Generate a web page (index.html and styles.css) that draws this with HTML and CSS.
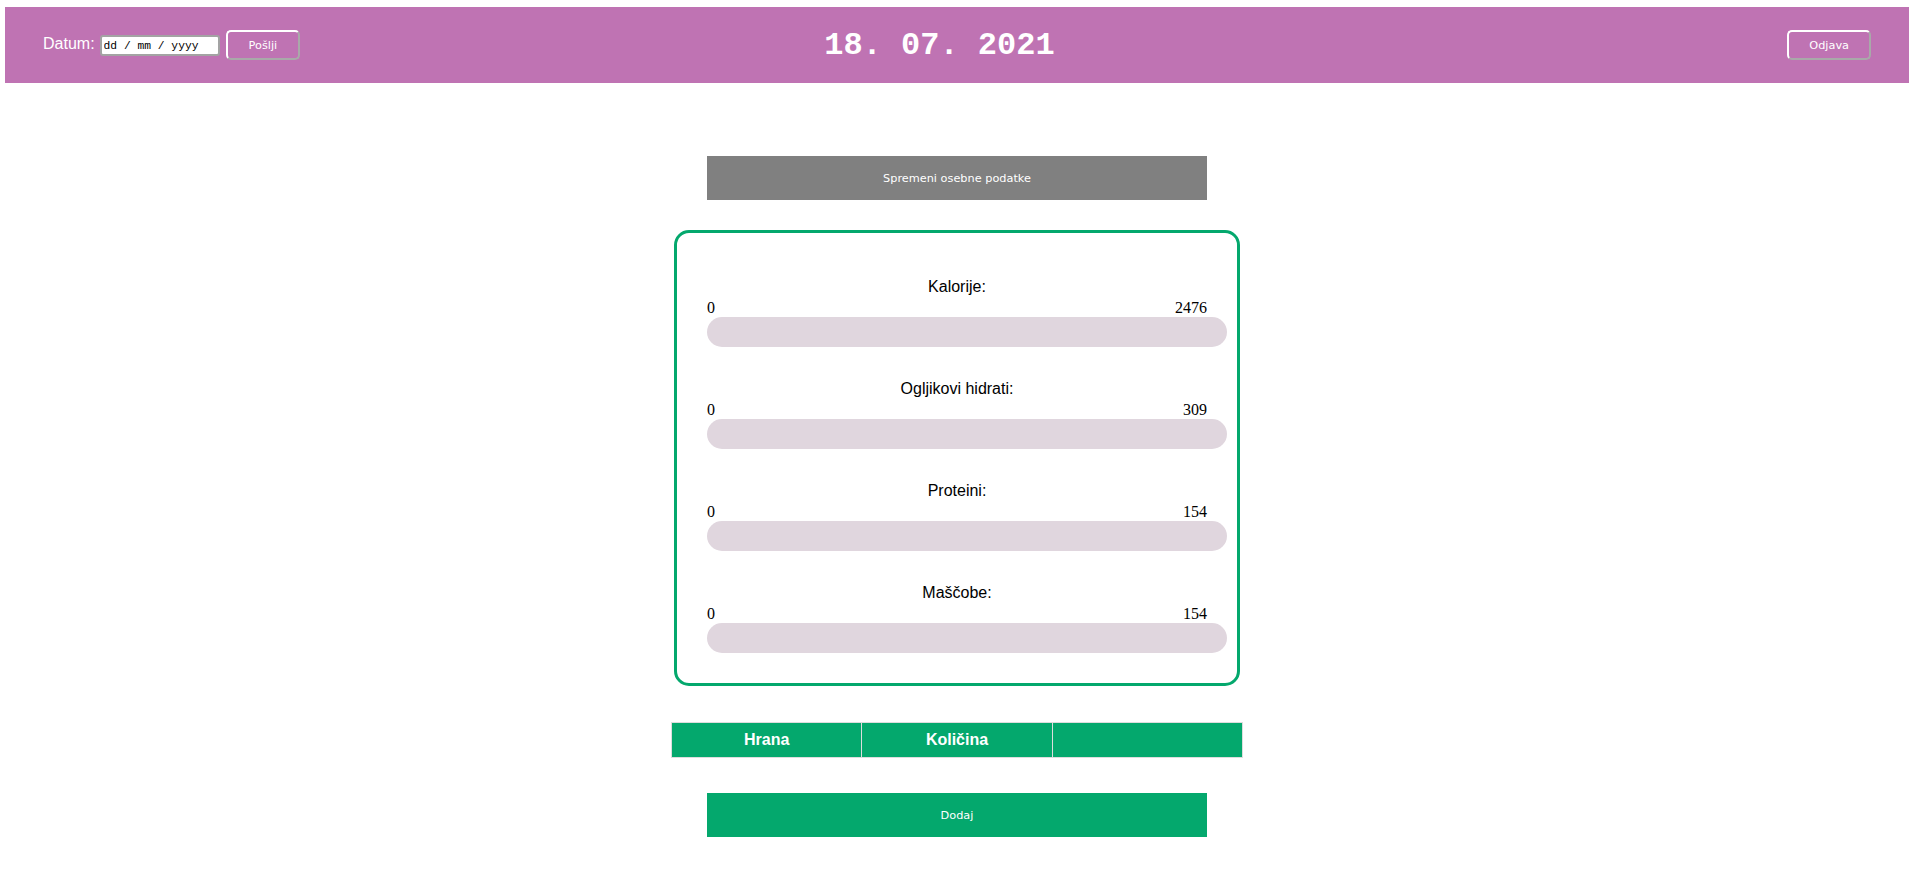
FILE: index.html
```html
<!DOCTYPE html>
<html lang="sl">
<head>
<meta charset="utf-8">
<title>Dnevnik prehrane</title>
<link rel="stylesheet" href="styles.css">
</head>
<body>
<header class="topbar">
  <form class="date-form">
    <label class="date-label" for="datum">Datum:</label>
    <input class="date-input" id="datum" type="text" value="dd / mm / yyyy" readonly>
    <button class="outline-btn send" type="button">Pošlji</button>
  </form>
  <h1 class="today">18. 07. 2021</h1>
  <button class="outline-btn logout" type="button">Odjava</button>
</header>

<main class="content">
  <button class="wide-btn gray" type="button">Spremeni osebne podatke</button>

  <section class="card">
    <div class="stat">
      <div class="stat-title">Kalorije:</div>
      <div class="stat-range"><span>0</span><span>2476</span></div>
      <div class="bar"></div>
    </div>
    <div class="stat">
      <div class="stat-title">Ogljikovi hidrati:</div>
      <div class="stat-range"><span>0</span><span>309</span></div>
      <div class="bar"></div>
    </div>
    <div class="stat">
      <div class="stat-title">Proteini:</div>
      <div class="stat-range"><span>0</span><span>154</span></div>
      <div class="bar"></div>
    </div>
    <div class="stat">
      <div class="stat-title">Maščobe:</div>
      <div class="stat-range"><span>0</span><span>154</span></div>
      <div class="bar"></div>
    </div>
  </section>

  <table class="food-table">
    <thead>
      <tr><th>Hrana</th><th>Količina</th><th></th></tr>
    </thead>
  </table>

  <button class="wide-btn green" type="button">Dodaj</button>
</main>
</body>
</html>
```

FILE: styles.css
```css
html, body {
  background: #ffffff;
}

body {
  margin: 7px 8px 0 5px;
  font-family: "Liberation Sans", Arial, sans-serif;
}

.topbar {
  height: 76px;
  background: #bf73b3;
  display: flex;
  align-items: center;
  padding: 0 38px 0 38px;
  box-sizing: border-box;
}

.date-form {
  display: flex;
  align-items: baseline;
  margin: 0;
}

.date-label {
  color: #ffffff;
  font-size: 16px;
  line-height: 18px;
  margin-right: 5px;
}

.date-input {
  width: 120px;
  height: 21px;
  box-sizing: border-box;
  border: 2px solid #a3a3a3;
  border-radius: 3px;
  padding: 0 0 0 2px;
  background: #ffffff;
  color: #000000;
  font-family: "Liberation Mono", "Courier New", monospace;
  font-size: 11.3px;
  margin: 0 6px 0 0;
}

.outline-btn {
  height: 30px;
  padding: 0 20px;
  background: transparent;
  color: #ffffff;
  border: 2px solid #ffffff;
  border-right-color: #a9a9a9;
  border-bottom-color: #a9a9a9;
  border-radius: 5px;
  font-family: "DejaVu Sans", Verdana, sans-serif;
  font-size: 11.3px;
  cursor: pointer;
}

.send {
  padding: 0 21px;
}

.today {
  margin: 0 0 0 524px;
  color: #ffffff;
  font-family: "Liberation Mono", "Courier New", monospace;
  font-weight: bold;
  font-size: 32px;
  line-height: normal;
}

.logout {
  margin-left: auto;
}

.content {
  display: flex;
  flex-direction: column;
  align-items: center;
  padding-top: 73px;
}

.wide-btn {
  width: 500px;
  height: 44px;
  border: none;
  color: #ffffff;
  font-family: "DejaVu Sans", Verdana, sans-serif;
  font-size: 11.3px;
  padding: 0;
  cursor: pointer;
}

.wide-btn.gray {
  background: #808080;
}

.wide-btn.green {
  background: #04a86d;
  margin-top: 35px;
}

.card {
  margin-top: 30px;
  width: 500px;
  padding: 45px 30px 30px;
  border: 3px solid #04a86d;
  border-radius: 15px;
  display: flex;
  flex-direction: column;
  gap: 33px;
}

.stat-title {
  text-align: center;
  font-size: 16px;
  line-height: 18px;
  color: #000000;
  margin-bottom: 2px;
}

.stat-range {
  display: flex;
  justify-content: space-between;
  font-family: "Liberation Serif", "Times New Roman", serif;
  font-size: 16px;
  line-height: 19px;
  color: #000000;
}

.bar {
  height: 30px;
  margin-right: -20px;
  border-radius: 15px;
  background: #e0d6de;
}

.food-table {
  margin-top: 36px;
  width: 572px;
  border-collapse: collapse;
  table-layout: fixed;
}

.food-table th {
  background: #04a86d;
  color: #ffffff;
  border: 1px solid #dddddd;
  font-size: 16px;
  font-weight: bold;
  line-height: 18px;
  padding: 8px 0;
  text-align: center;
}
```
